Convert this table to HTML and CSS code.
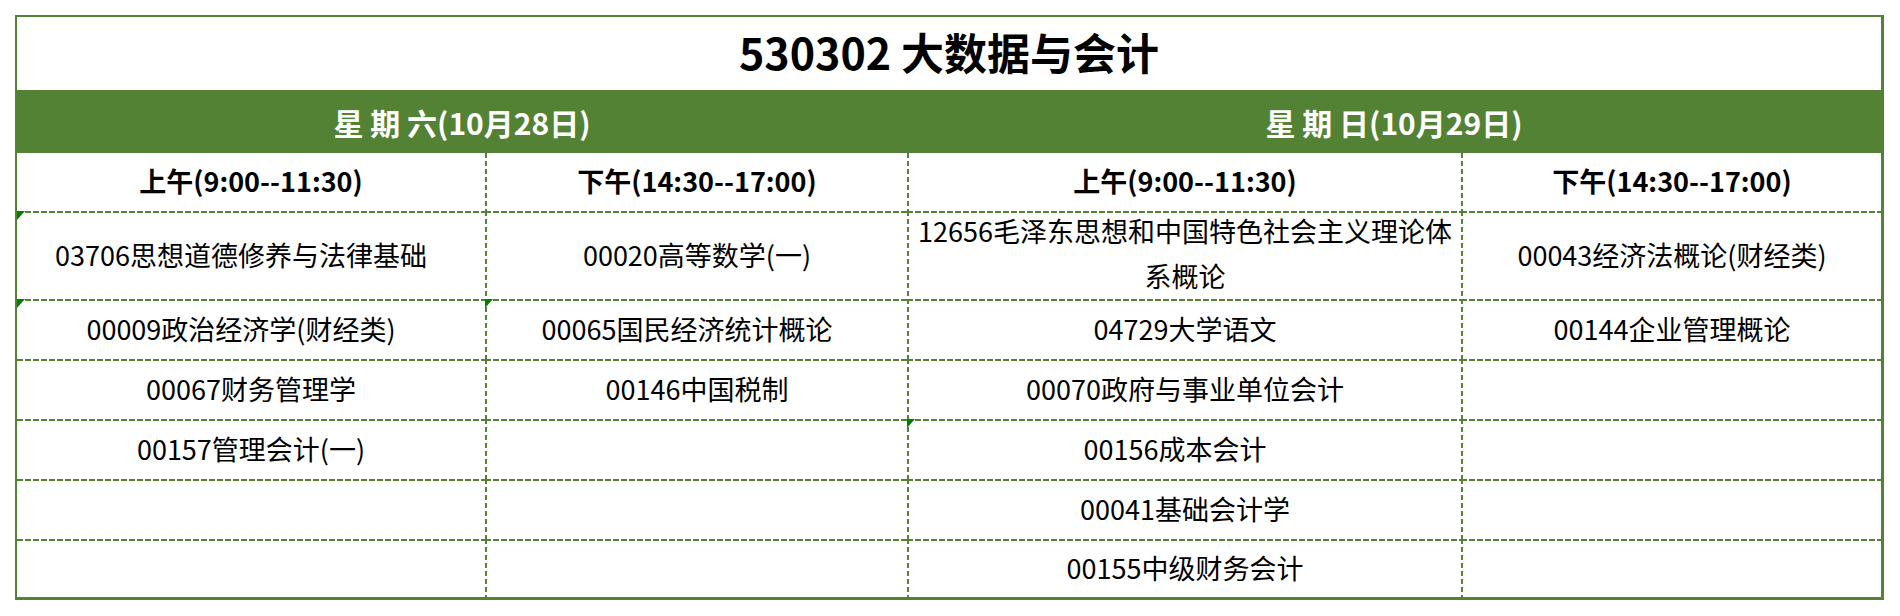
FILE: index.html
```html
<!DOCTYPE html>
<html lang="zh-CN">
<head>
<meta charset="utf-8">
<title>530302 大数据与会计</title>
<link rel="stylesheet" href="styles.css">
</head>
<body>
<div class="sheet">
  <div class="title">530302 大数据与会计</div>
  <div class="day">星 期 六(10月28日)</div>
  <div class="day">星 期 日(10月29日)</div>

  <div class="cell time">上午(9:00--11:30)</div>
  <div class="cell time l">下午(14:30--17:00)</div>
  <div class="cell time l">上午(9:00--11:30)</div>
  <div class="cell time l">下午(14:30--17:00)</div>

  <div class="cell t flagged"><span class="flag"></span>03706思想道德修养与法律基础</div>
  <div class="cell t l">00020高等数学(一)</div>
  <div class="cell t l wrap">12656毛泽东思想和中国特色社会主义理论体系概论</div>
  <div class="cell t l">00043经济法概论(财经类)</div>

  <div class="cell t flagged"><span class="flag"></span>00009政治经济学(财经类)</div>
  <div class="cell t l flagged"><span class="flag"></span>00065国民经济统计概论</div>
  <div class="cell t l">04729大学语文</div>
  <div class="cell t l">00144企业管理概论</div>

  <div class="cell t">00067财务管理学</div>
  <div class="cell t l">00146中国税制</div>
  <div class="cell t l">00070政府与事业单位会计</div>
  <div class="cell t l"></div>

  <div class="cell t">00157管理会计(一)</div>
  <div class="cell t l"></div>
  <div class="cell t l flagged"><span class="flag"></span>00156成本会计</div>
  <div class="cell t l"></div>

  <div class="cell t"></div>
  <div class="cell t l"></div>
  <div class="cell t l">00041基础会计学</div>
  <div class="cell t l"></div>

  <div class="cell t"></div>
  <div class="cell t l"></div>
  <div class="cell t l">00155中级财务会计</div>
  <div class="cell t l"></div>
</div>
</body>
</html>
```

FILE: styles.css
```css
html, body {
  margin: 0;
  padding: 0;
  background: #ffffff;
}

body {
  font-family: "Noto Sans CJK SC", "Noto Sans", sans-serif;
  color: #000000;
}

.sheet {
  margin: 15px 0 0 15px;
  width: 1864px;
  border-style: solid;
  border-color: #548235;
  border-width: 2px 3px 3px 2px;
  display: grid;
  grid-template-columns: 468px 422px 554px 420px;
  grid-template-rows: 74px 62px 58px 88px 60px 60px 60px 60px 58px;
}

.title {
  grid-column: 1 / 5;
  display: flex;
  align-items: center;
  justify-content: center;
  font-size: 43px;
  font-weight: 700;
  line-height: 1;
  padding-bottom: 6px;
}

.day {
  grid-column: span 2;
  background: #548235;
  color: #ffffff;
  display: flex;
  align-items: center;
  justify-content: center;
  font-size: 30px;
  font-weight: 700;
  line-height: 1;
  margin-top: -1px;
}

.cell {
  position: relative;
  display: flex;
  align-items: center;
  justify-content: center;
  text-align: center;
  font-size: 27px;
  line-height: 1;
  padding: 0 4px 2px;
  background-repeat: repeat-x;
}

.time {
  font-weight: 700;
  font-size: 27px;
  padding-bottom: 3px;
}

.t {
  background-image: linear-gradient(to right, #548235 6px, transparent 6px);
  background-size: 8px 2px;
  background-position: 0 0;
  background-repeat: repeat-x;
}

.l {
  padding-left: 6px;
  background-image: linear-gradient(to bottom, #548235 5px, transparent 5px);
  background-size: 2px 8px;
  background-position: 0 0;
  background-repeat: repeat-y;
}

.t.l {
  background-image:
    linear-gradient(to right, #548235 6px, transparent 6px),
    linear-gradient(to bottom, #548235 5px, transparent 5px);
  background-size: 8px 2px, 2px 8px;
  background-position: 0 0, 0 0;
  background-repeat: repeat-x, repeat-y;
}

.flagged {
  padding-right: 24px;
}

.wrap {
  line-height: 45px;
  padding-bottom: 4px;
}

.flag {
  position: absolute;
  top: 0;
  left: 0;
  width: 0;
  height: 0;
  border-top: 9px solid #008000;
  border-right: 8px solid transparent;
}
```
